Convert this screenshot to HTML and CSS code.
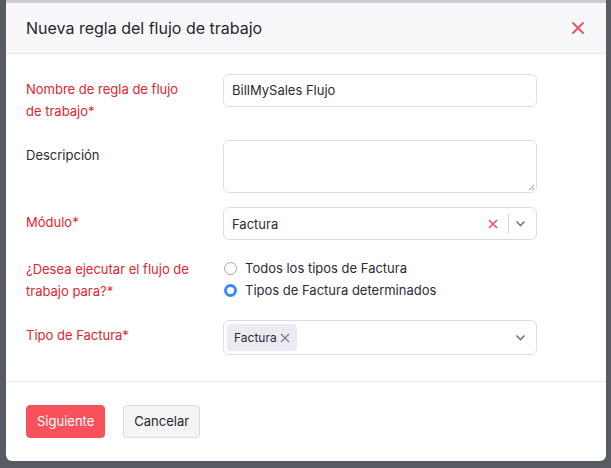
FILE: index.html
```html
<!DOCTYPE html>
<html lang="es">
<head>
	<meta charset="UTF-8">
	<title>Nueva regla del flujo de trabajo</title>
<link rel="stylesheet" href="styles.css">
</head>
<body>
	<div class="modal">
		<div class="modal-head">
			<h2>Nueva regla del flujo de trabajo</h2>
			<a href="javascript:;" class="close">
				<svg width="12" height="12" viewBox="0 0 12 12"><path d="M1 1L11 11M11 1L1 11" stroke="#ef4e5c" stroke-width="1.8" stroke-linecap="round"/></svg>
			</a>
		</div>
		<div class="modal-body">
			<div class="row">
				<label class="req">Nombre de regla de flujo de trabajo*</label>
				<div class="field"><div class="input">BillMySales Flujo</div></div>
			</div>
			<div class="row">
				<label>Descripción</label>
				<div class="field">
					<div class="textarea">
						<svg class="grip" width="8" height="8" viewBox="0 0 8 8"><path d="M7 2L2 7M7 5L5 7" stroke="#888" stroke-width="0.9"/></svg>
					</div>
				</div>
			</div>
			<div class="row">
				<label class="req">Módulo*</label>
				<div class="field">
					<div class="select">
						<span class="value">Factura</span>
						<svg class="clear" width="10" height="10" viewBox="0 0 10 10"><path d="M1 1L9 9M9 1L1 9" stroke="#ef4e5c" stroke-width="1.6"/></svg>
						<span class="sep"></span>
						<svg class="arrow" width="11" height="7" viewBox="0 0 11 7"><path d="M1.5 1.5L5.5 5.5L9.5 1.5" fill="none" stroke="#777" stroke-width="1.6"/></svg>
					</div>
				</div>
			</div>
			<div class="row">
				<label class="req">¿Desea ejecutar el flujo de<br>trabajo para?*</label>
				<div class="field radios">
					<div class="radio"><span class="dot"></span>Todos los tipos de Factura</div>
					<div class="radio on"><span class="dot"></span>Tipos de Factura determinados</div>
				</div>
			</div>
			<div class="row">
				<label class="req">Tipo de Factura*</label>
				<div class="field">
					<div class="select multi">
						<span class="chip">Factura
							<svg width="10" height="10" viewBox="0 0 10 10"><path d="M1 1L9 9M9 1L1 9" stroke="#777" stroke-width="1.1"/></svg>
						</span>
						<svg class="arrow" width="11" height="7" viewBox="0 0 11 7"><path d="M1.5 1.5L5.5 5.5L9.5 1.5" fill="none" stroke="#777" stroke-width="1.6"/></svg>
					</div>
				</div>
			</div>
		</div>
		<div class="modal-foot">
			<a href="javascript:;" class="btn primary">Siguiente</a>
			<a href="javascript:;" class="btn">Cancelar</a>
		</div>
	</div>
</body>
</html>
```

FILE: styles.css
```css
*{box-sizing:border-box;}
body{margin:0;background:#575b62;font-family:Inter,"Noto Sans",sans-serif;font-size:13px;color:#2b2b33;}
a{text-decoration:none;}
.modal{margin:0 5px 0 6px;background:#fff;border-top:3px solid #cbcbcf;border-radius:0 0 6px 6px;overflow:hidden;}
.modal-head{height:51px;background:#f8f8fa;border-bottom:1px solid #e8e8ed;display:flex;align-items:center;justify-content:space-between;padding:0 20px;}
.modal-head h2{margin:0;font-size:16px;font-weight:400;color:#26262e;}
.close{display:flex;margin-right:2px;}
.modal-body{padding:20px 20px 12px;}
.row{display:flex;margin-bottom:14px;}
.row label{width:197px;flex:none;padding:4px 26px 4px 0;line-height:22px;color:#2b2b33;}
.row label.req{color:#e0252f;}
.field{width:314px;}
.input{height:33px;border:1px solid #dcdce4;border-radius:6px;padding:0 8px;line-height:31px;}
.textarea{height:53px;border:1px solid #dcdce4;border-radius:6px;position:relative;}
.grip{position:absolute;right:1px;bottom:1px;}
.select{height:33px;border:1px solid #dcdce4;border-radius:6px;display:flex;align-items:center;padding:0 10px 0 8px;}
.select .value{flex:1;}
.select .clear{margin-right:10px;}
.sep{width:1px;height:20px;background:#d6d6dc;margin-right:6px;}
.select.multi{height:35px;padding-left:3px;}
.chip{display:flex;align-items:center;gap:3px;height:27px;background:#ebebf3;border-radius:4px;padding:0 7px;font-size:12px;margin-right:auto;}
.radios{padding-top:3px;}
.radio{display:flex;align-items:center;line-height:22px;}
.dot{width:13px;height:13px;border:1px solid #a9a9ae;border-radius:50%;margin:0 8px 0 1px;}
.radio.on .dot{border:3.5px solid #3b87f6;background:#fff;}
.modal-foot{border-top:1px solid #e8e8ed;padding:23px 20px 23px;display:flex;gap:18px;}
.btn{display:block;height:33px;line-height:31px;padding:0 10px;border:1px solid #dcdcdf;border-radius:4px;background:#f4f4f5;color:#26262e;}
.btn.primary{background:#f7525b;border-color:#f7525b;color:#fff;}
```
